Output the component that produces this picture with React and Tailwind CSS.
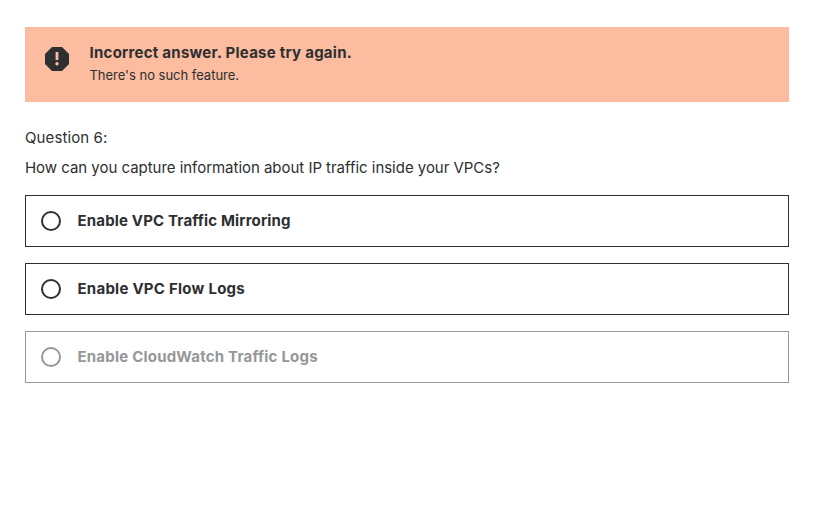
const answers = [
  { label: 'Enable VPC Traffic Mirroring', tracking: 'tracking-[0.16px]' },
  { label: 'Enable VPC Flow Logs', tracking: 'tracking-[0.25px]' },
  { label: 'Enable CloudWatch Traffic Logs', tracking: 'tracking-[0.21px]', disabled: true },
];

function Answer({ label, tracking, disabled }) {
  return (
    <label className={`flex h-[52px] items-center border px-[15px] ${disabled ? 'border-[#969798] text-[#969798]' : 'border-[#2d2f31] text-[#2d2f31]'}`}>
      <span className="size-5 shrink-0 rounded-full border-2 border-current" />
      <span className={`ml-[16.5px] text-[15px] leading-5 font-bold whitespace-nowrap ${tracking}`}>{label}</span>
    </label>
  );
}

export default function App() {
  return (
    <main className="h-[507px] bg-white pt-[27px] pr-[35px] pl-[25px] font-['Inter',sans-serif] text-[#2d2f31]">
      <section className="flex h-[75px] bg-[#fcbca0] pt-5 pl-5">
        <svg width="24" height="24" viewBox="0 0 24 24" className="shrink-0">
          <path d="M7 0h10l7 7v10l-7 7H7l-7-7V7z" fill="#2d2f31" />
          <path d="M10.6 5h2.8v8h-2.8z" fill="#fcbca0" />
          <circle cx="12" cy="16.7" r="1.7" fill="#fcbca0" />
        </svg>
        <div className="-mt-1 ml-[20.5px] whitespace-nowrap">
          <h1 className="text-[15px] leading-5 font-bold tracking-[0.25px]">Incorrect answer. Please try again.</h1>
          <p className="mt-0.5 text-[13px] leading-5 tracking-[-0.02px]">There's no such feature.</p>
        </div>
      </section>
      <p className="mt-[26px] text-[15px] leading-5 tracking-[0.1px]">Question 6:</p>
      <p className="mt-[10px] text-[15px] leading-5 tracking-[-0.03px]">How can you capture information about IP traffic inside your VPCs?</p>
      <div className="mt-[17px] grid gap-4">
        {answers.map((answer) => <Answer key={answer.label} {...answer} />)}
      </div>
    </main>
  );
}
